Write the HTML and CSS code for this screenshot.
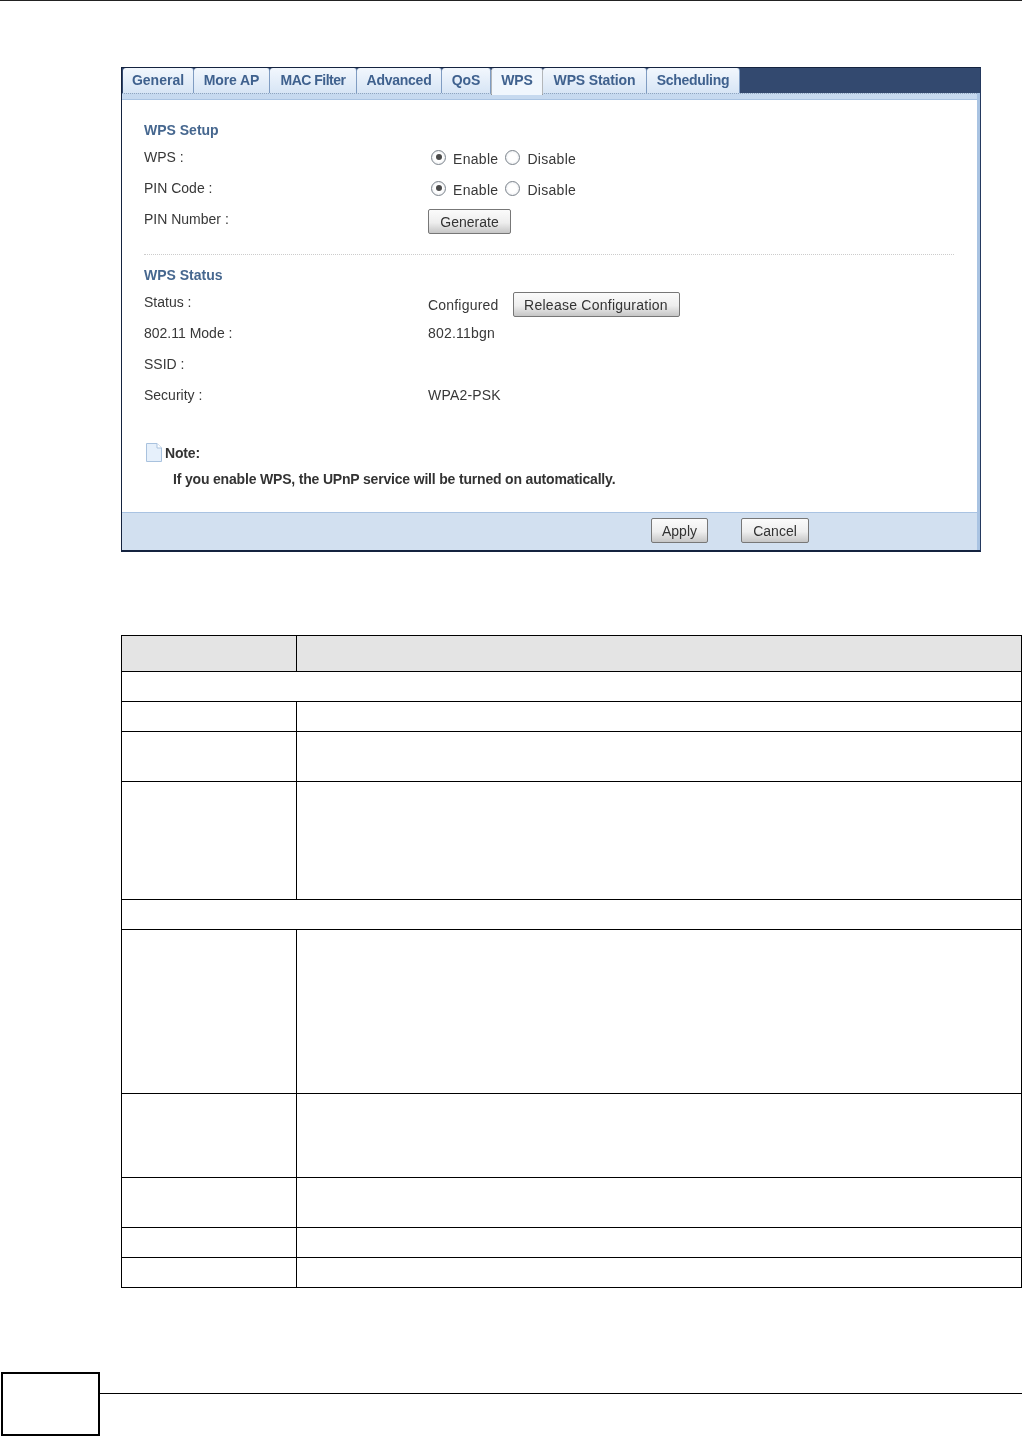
FILE: index.html
```html
<!DOCTYPE html>
<html lang="en">
<head>
<meta charset="utf-8">
<title>WPS</title>
<link rel="stylesheet" href="styles.css">
</head>
<body>
<div class="page">
  <div class="top-rule"></div>
  <section class="panel">
    <nav class="tabs">
      <span class="tab w-general">General</span>
      <span class="tab w-more">More AP</span>
      <span class="tab w-mac">MAC Filter</span>
      <span class="tab w-adv">Advanced</span>
      <span class="tab w-qos">QoS</span>
      <span class="tab active w-wps">WPS</span>
      <span class="tab w-station">WPS Station</span>
      <span class="tab w-sched">Scheduling</span>
    </nav>
    <div class="tab-rule"></div>
    <div class="content">
      <h2 class="heading">WPS Setup</h2>
      <div class="row">
        <span class="label">WPS :</span>
        <span class="value radios">
          <span class="radio on"></span><span class="radio-text">Enable</span>
          <span class="radio"></span><span class="radio-text">Disable</span>
        </span>
      </div>
      <div class="row">
        <span class="label">PIN Code :</span>
        <span class="value radios">
          <span class="radio on"></span><span class="radio-text">Enable</span>
          <span class="radio"></span><span class="radio-text">Disable</span>
        </span>
      </div>
      <div class="row">
        <span class="label">PIN Number :</span>
        <span class="value low"><button class="btn btn-generate" type="button">Generate</button></span>
      </div>
      <div class="divider"></div>
      <h2 class="heading heading-status">WPS Status</h2>
      <div class="row">
        <span class="label">Status :</span>
        <span class="value low">Configured<button class="btn btn-release" type="button">Release Configuration</button></span>
      </div>
      <div class="row">
        <span class="label">802.11 Mode :</span>
        <span class="value">802.11bgn</span>
      </div>
      <div class="row">
        <span class="label">SSID :</span>
        <span class="value"></span>
      </div>
      <div class="row">
        <span class="label">Security :</span>
        <span class="value">WPA2-PSK</span>
      </div>
      <div class="note-title">
        <svg class="note-icon" width="16" height="19" viewBox="0 0 16 19"><path d="M.5 .5H11L15.5 5V18.5H.5Z" fill="#e6f0fb" stroke="#a9c2de"/><path d="M11 .5V5H15.5" fill="#fff" stroke="#a9c2de"/></svg>
        <span>Note:</span>
      </div>
      <p class="note-text">If you enable WPS, the UPnP service will be turned on automatically.</p>
    </div>
    <footer class="actions">
      <button class="btn btn-apply" type="button">Apply</button>
      <button class="btn btn-cancel" type="button">Cancel</button>
    </footer>
  </section>

  <table class="doc-table">
    <colgroup><col class="col-a"><col class="col-b"></colgroup>
    <tr class="h36 head"><td></td><td></td></tr>
    <tr class="h30"><td colspan="2"></td></tr>
    <tr class="h30"><td></td><td></td></tr>
    <tr class="h50"><td></td><td></td></tr>
    <tr class="h118"><td></td><td></td></tr>
    <tr class="h30"><td colspan="2"></td></tr>
    <tr class="h164"><td></td><td></td></tr>
    <tr class="h84"><td></td><td></td></tr>
    <tr class="h50"><td></td><td></td></tr>
    <tr class="h30"><td></td><td></td></tr>
    <tr class="h30"><td></td><td></td></tr>
  </table>

  <footer class="page-foot">
    <div class="page-box"></div>
    <div class="foot-rule"></div>
  </footer>
</div>
</body>
</html>
```
FILE: styles.css
```css
html, body { margin: 0; padding: 0; background: #fff; }
body { font-family: "Liberation Sans", Arial, sans-serif; color: #333; }
.page { width: 1022px; height: 1437px; overflow: hidden; display: flex; flex-direction: column; }
.top-rule { height: 1px; background: #222; flex: none; }

.panel { margin: 66px 0 0 121px; width: 860px; height: 485px; box-sizing: border-box; border: 1px solid #14233f; border-right: 1px solid #24395f; border-bottom: 2px solid #14233f; background: #fff; display: flex; flex-direction: column; flex: none; box-shadow: inset -3px 0 0 #a9c3e2; filter: blur(.35px); }
.tabs { height: 25px; background: #33496f; display: flex; padding-left: 1px; flex: none; }
.tab { box-sizing: border-box; height: 25px; display: flex; align-items: center; justify-content: center; font-size: 14px; letter-spacing: -.12px; font-weight: bold; color: #3f618e; background: linear-gradient(#f2f7fd, #d7e5f5); border-right: 1px solid #7f9cc2; border-radius: 3px 3px 0 0; padding-bottom: 2px; }
.tab.active { background: #f0f6fd; height: 27px; z-index: 1; border-right: 1px dotted #777; border-left: 1px dotted #777; padding-bottom: 4px; }
.w-general { width: 71px; letter-spacing: 0; }
.w-more { width: 76px; }
.w-mac { width: 87px; letter-spacing: -.5px; }
.w-adv { width: 85px; letter-spacing: -.25px; }
.w-qos { width: 49px; }
.w-wps { width: 52px; }
.w-station { width: 104px; }
.w-sched { width: 93px; letter-spacing: -.3px; }
.tab-rule { height: 7px; background: #c6d9ef; border-top: 1px dotted #8fa5bf; border-bottom: 1px solid #a9c3e2; box-sizing: border-box; flex: none; margin-right: 3px; }

.content { flex: 1; padding: 22px 26px 0 22px; min-height: 0; }
.heading { margin: 0 0 3px; font-size: 14px; font-weight: bold; color: #46678f; line-height: 16px; height: 16px; }
.heading-status { padding-top: 12px; }
.row { display: flex; height: 31px; align-items: center; font-size: 14px; color: #383838; }
.label { width: 284px; flex: none; }
.value { display: flex; align-items: center; letter-spacing: .2px; }
.low { padding-top: 6px; }

.radios { position: relative; top: 2px; padding-left: 3px; }
.radio { width: 15px; height: 15px; border-radius: 50%; box-sizing: border-box; border: 1px solid #7c848c; background: radial-gradient(circle, #fff 45%, #dde1e6); display: flex; align-items: center; justify-content: center; margin-top: -3px; }
.radio.on::after { content: ""; width: 6px; height: 6px; border-radius: 50%; background: #4a4a4a; }
.radio-text { margin: 0 7px 0 7px; letter-spacing: .3px; }

.btn { font: 14px "Liberation Sans", Arial, sans-serif; color: #333; background: linear-gradient(#fbfbfb 0%, #eeeeee 55%, #c6c6c6 100%); border: 1px solid #777; border-radius: 2px; padding: 0; height: 25px; box-sizing: border-box; cursor: default; letter-spacing: 0; }
.btn-generate { width: 83px; }
.btn-release { width: 167px; margin-left: 14px; letter-spacing: .25px; }
.btn-apply { width: 57px; }
.btn-cancel { width: 68px; }

.divider { border-top: 1px dotted #ccc; margin-top: 20px; }

.note-title { display: flex; align-items: center; gap: 3px; margin-top: 33px; font-size: 14px; letter-spacing: -.18px; font-weight: bold; height: 19px; }
.note-icon { flex: none; margin-left: 2px; }
.note-text { margin: 8px 0 0 29px; font-size: 14px; letter-spacing: -.18px; font-weight: bold; line-height: 18px; }

.actions { height: 38px; flex: none; box-sizing: border-box; margin-right: 3px; background: #d2e0f0; border-top: 1px solid #a9c3e2; display: flex; align-items: center; gap: 33px; padding: 0 0 2px 529px; }

.doc-table { border-collapse: collapse; table-layout: fixed; width: 900px; margin: 83px 0 0 121px; flex: none; }
.doc-table td { border: 1px solid #000; padding: 0; }
.col-a { width: 175px; }
.col-b { width: 725px; }
.head td { background: #e4e4e4; }
.h30 { height: 30px; }
.h36 { height: 36px; }
.h50 { height: 50px; }
.h84 { height: 84px; }
.h118 { height: 118px; }
.h164 { height: 164px; }

.page-foot { position: relative; flex: 1; }
.page-box { position: absolute; left: 1px; top: 84px; width: 99px; height: 64px; box-sizing: border-box; border: 2px solid #000; }
.foot-rule { position: absolute; left: 100px; right: 0; top: 105px; height: 1px; background: #000; }
```
